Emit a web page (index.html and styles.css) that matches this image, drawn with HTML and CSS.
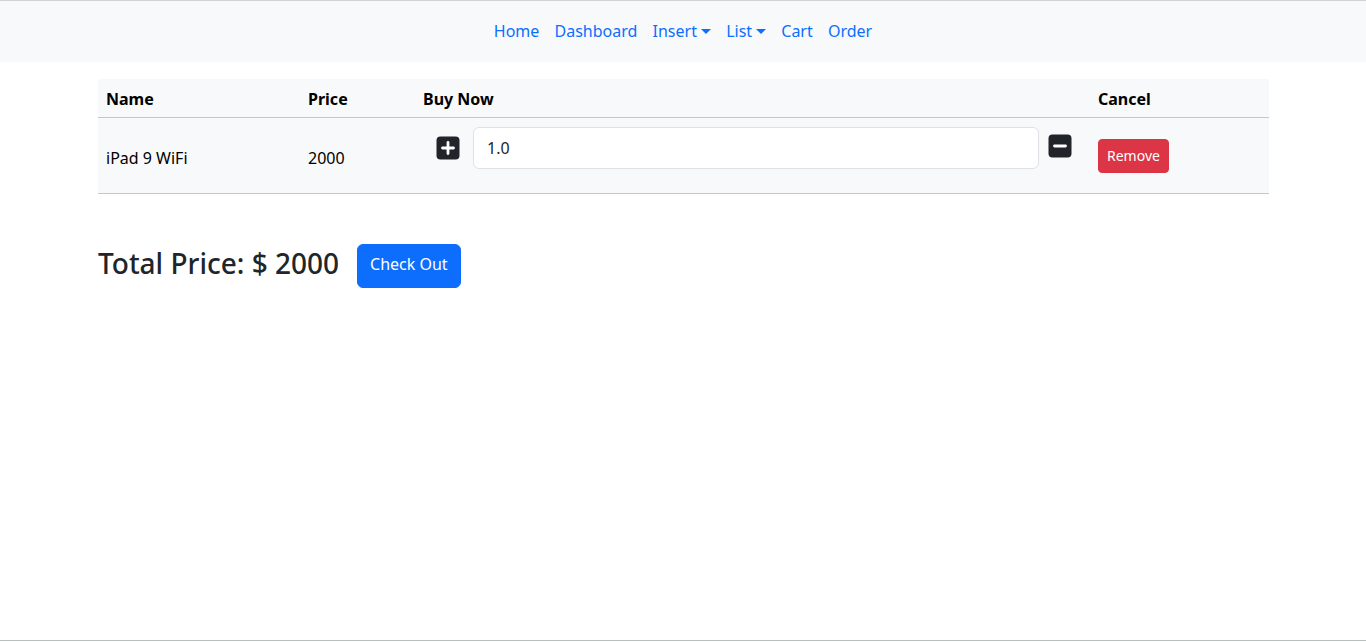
FILE: index.html
```html
<!DOCTYPE html>
<html lang="en">
<head>
<meta charset="utf-8">
<title>Cart</title>
<link rel="stylesheet" href="styles.css">
</head>
<body>
<div class="page">
  <nav class="navbar">
    <ul class="nav">
      <li><a class="nav-link" href="#">Home</a></li>
      <li><a class="nav-link" href="#">Dashboard</a></li>
      <li><a class="nav-link dropdown" href="#">Insert</a></li>
      <li><a class="nav-link dropdown" href="#">List</a></li>
      <li><a class="nav-link" href="#">Cart</a></li>
      <li><a class="nav-link" href="#">Order</a></li>
    </ul>
  </nav>

  <main class="container">
    <table class="cart-table">
      <thead>
        <tr>
          <th class="col-name">Name</th>
          <th class="col-price">Price</th>
          <th class="col-buy">Buy Now</th>
          <th class="col-cancel">Cancel</th>
        </tr>
      </thead>
      <tbody>
        <tr>
          <td class="text-cell">iPad 9 WiFi</td>
          <td class="text-cell">2000</td>
          <td class="buy-cell">
            <div class="qty">
              <button class="icon-btn plus" aria-label="Increase">
                <svg width="24" height="24" viewBox="0 0 24 24"><rect x="0.5" y="0.5" width="23" height="23" rx="4" fill="#212529"/><path d="M12 6.5v11M6.5 12h11" stroke="#fff" stroke-width="2.8" stroke-linecap="round"/></svg>
              </button>
              <input class="qty-input" type="text" value="1.0">
              <button class="icon-btn minus" aria-label="Decrease">
                <svg width="24" height="24" viewBox="0 0 24 24"><rect x="0.5" y="0.5" width="23" height="23" rx="4" fill="#212529"/><path d="M6.5 12h11" stroke="#fff" stroke-width="2.8" stroke-linecap="round"/></svg>
              </button>
            </div>
          </td>
          <td><button class="btn btn-danger">Remove</button></td>
        </tr>
      </tbody>
    </table>

    <div class="total-row">
      <h3 class="total">Total Price: $ 2000</h3>
      <button class="btn btn-primary">Check Out</button>
    </div>
  </main>

  <footer class="footer"></footer>
</div>
</body>
</html>
```

FILE: styles.css
```css
* { box-sizing: border-box; }
html, body { margin: 0; padding: 0; }
body {
  font-family: "Noto Sans", "Open Sans", sans-serif;
  font-size: 16px;
  line-height: 1.5;
  color: #212529;
  background: #fff;
}
.page {
  min-height: 642px;
  display: flex;
  flex-direction: column;
  border-top: 1px solid #cfd1d3;
}
.navbar {
  background: #f8f9fa;
  height: 61px;
  display: flex;
  align-items: center;
  justify-content: center;
}
.nav {
  list-style: none;
  margin: 0;
  padding: 0;
  display: flex;
  align-items: center;
}
.nav-link {
  display: block;
  padding: 7px 7.6px 9px;
  color: #0d6efd;
  text-decoration: none;
  font-size: 16px;
}
.dropdown::after {
  content: "";
  display: inline-block;
  margin-left: 4px;
  vertical-align: 3px;
  border-top: 5px solid #0d6efd;
  border-left: 5px solid transparent;
  border-right: 5px solid transparent;
}
.container {
  width: 1171px;
  margin: 17px 0 0 98px;
  flex: 1;
}
.cart-table {
  width: 100%;
  border-collapse: collapse;
  background: #f8f9fa;
}
.cart-table th {
  text-align: left;
  font-weight: 700;
  color: #000;
  padding: 8px 8px 6px;
  line-height: 24px;
  border-bottom: 1px solid #c4c6c8;
}
.cart-table td {
  padding: 8px 8px;
  vertical-align: middle;
  color: #000;
  border-bottom: 1px solid #c4c6c8;
}
.cart-table td.text-cell { padding-top: 10px; padding-bottom: 6px; }
.col-name { width: 202px; }
.col-price { width: 115px; }
.col-buy { width: 675px; }
.buy-cell { padding: 9px 8px 16px 8px !important; }
.qty {
  display: flex;
  align-items: center;
  height: 42px;
  margin-bottom: 8px;
}
.icon-btn {
  background: none;
  border: 0;
  padding: 0;
  width: 24px;
  height: 24px;
  display: flex;
  cursor: pointer;
}
.plus { margin-left: 13px; margin-right: 13px; margin-top: -1px; }
.minus { margin-left: 9px; margin-top: -5px; }
.qty-input {
  width: 566px;
  height: 42px;
  border: 1px solid #dee2e6;
  border-radius: 6px;
  padding: 6px 13px;
  font-family: inherit;
  font-size: 16px;
  color: #212529;
  background: #fff;
}
.btn {
  font-family: inherit;
  border: 1px solid transparent;
  cursor: pointer;
  color: #fff;
}
.btn-danger {
  background: #dc3545;
  border-color: #dc3545;
  font-size: 14px;
  line-height: 20px;
  padding: 6px 8px;
  border-radius: 4px;
  margin-top: 0;
}
.total-row {
  display: flex;
  align-items: center;
  gap: 18px;
  margin-top: 50px;
}
.total {
  margin: 0 0 4px;
  font-size: 28px;
  font-weight: 500;
  line-height: 1.2;
}
.btn-primary {
  background: #0d6efd;
  border-color: #0d6efd;
  font-size: 16px;
  line-height: 24px;
  padding: 7px 12px 11px;
  border-radius: 6px;
}
.footer {
  height: 2px;
  border-top: 1px solid #b4c2bb;
  background: #fff;
}
```
